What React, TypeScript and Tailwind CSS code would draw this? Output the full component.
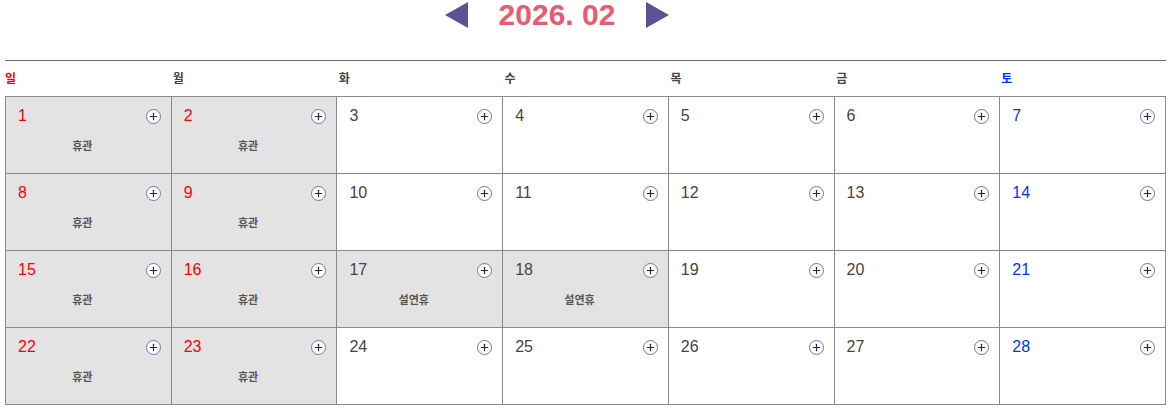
import { Plus } from "lucide-react";

type Day = { d: number; note?: string };

const weekdays = ["일", "월", "화", "수", "목", "금", "토"];

const days: Day[] = [
  { d: 1, note: "휴관" },
  { d: 2, note: "휴관" },
  { d: 3 },
  { d: 4 },
  { d: 5 },
  { d: 6 },
  { d: 7 },
  { d: 8, note: "휴관" },
  { d: 9, note: "휴관" },
  { d: 10 },
  { d: 11 },
  { d: 12 },
  { d: 13 },
  { d: 14 },
  { d: 15, note: "휴관" },
  { d: 16, note: "휴관" },
  { d: 17, note: "설연휴" },
  { d: 18, note: "설연휴" },
  { d: 19 },
  { d: 20 },
  { d: 21 },
  { d: 22, note: "휴관" },
  { d: 23, note: "휴관" },
  { d: 24 },
  { d: 25 },
  { d: 26 },
  { d: 27 },
  { d: 28 },
];

function dayColor(i: number, note?: string) {
  const col = i % 7;
  if (col === 0) return "text-[#ff0000]";
  if (col === 6) return "text-[#0033ff]";
  if (note === "휴관") return "text-[#ff0000]";
  return "text-[#444]";
}

function AddButton() {
  return (
    <span className="flex h-[15px] w-[15px] items-center justify-center rounded-full border border-[#7a72a8] bg-white text-[#2a2456]">
      <Plus size={11} strokeWidth={2.6} />
    </span>
  );
}

export default function App() {
  return (
    <div className="bg-white px-[5px] font-['Liberation_Sans','Noto_Sans_CJK_KR',sans-serif]">
      <div className="flex items-center justify-center pr-[57px]">
        <span className="h-0 w-0 border-y-[13px] border-r-[23px] border-y-transparent border-r-[#5b5291]" />
        <h1 className="mx-[31px] text-[30px] font-bold leading-[30px] text-[#ea5a70]">2026. 02</h1>
        <span className="h-0 w-0 border-y-[13px] border-l-[23px] border-y-transparent border-l-[#5b5291]" />
      </div>

      <div className="mt-[30px] border-t border-[#6e6e6e]" />

      <div className="grid h-[35px] grid-cols-7 items-center text-[12px] font-bold text-[#444]">
        {weekdays.map((w, i) => (
          <span
            key={w}
            className={i === 0 ? "text-[#ff0000]" : i === 6 ? "pl-[1px] text-[#0033ff]" : "pl-[2px]"}
          >
            {w}
          </span>
        ))}
      </div>

      <div className="grid grid-cols-7 border-l border-t border-[#8a8a8a]">
        {days.map((day, i) => (
          <div
            key={day.d}
            className={`h-[77px] border-b border-r border-[#8a8a8a] pl-[12px] pr-[10px] pt-[10px] ${day.note ? "bg-[#e3e3e3]" : "bg-white"}`}
          >
            <div className="flex items-center justify-between">
              <span className={`text-[16px] leading-[18px] ${dayColor(i, day.note)}`}>{day.d}</span>
              <AddButton />
            </div>
            {day.note && (
              <p className="mt-[13px] pr-[14px] text-center text-[11px] font-bold text-[#555]">{day.note}</p>
            )}
          </div>
        ))}
      </div>
    </div>
  );
}
